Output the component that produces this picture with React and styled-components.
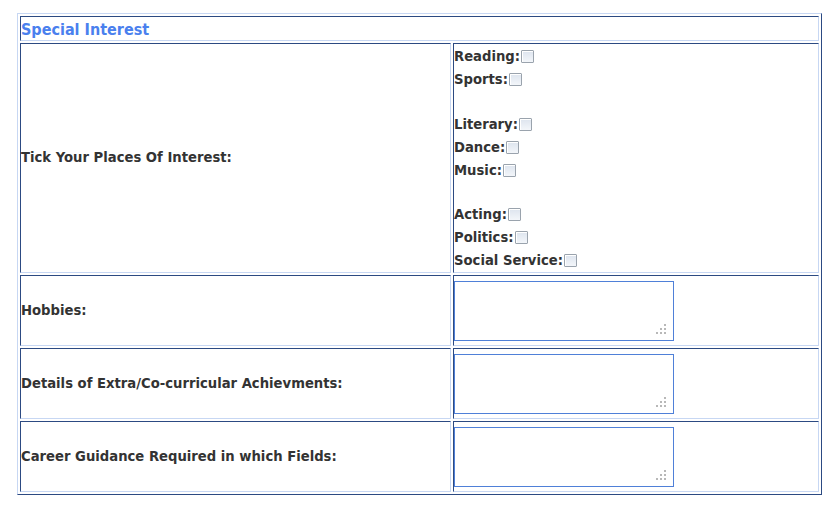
import React from 'react'
import styled, { createGlobalStyle } from 'styled-components'

const Global = createGlobalStyle`
  body {
    margin: 0;
    background: #fff;
    font-family: "DejaVu Sans", "Liberation Sans", sans-serif;
  }
`

const Page = styled.div`
  padding: 13px 0 0 17px;
`

const Table = styled.table`
  width: 805px;
  border-collapse: separate;
  border-spacing: 2px;
  border: 1px solid;
  border-color: #c7d7f3 #2c4a82 #2c4a82 #c7d7f3;
  table-layout: fixed;
`

const Col = styled.col`
  width: ${p => p.w}px;
`

const Cell = styled.td`
  padding: 0;
  border: 1px solid;
  border-color: #2c4a82 #c7d7f3 #c7d7f3 #2c4a82;
  vertical-align: middle;
  height: ${p => p.h - 2}px;
  font-size: 13.2px;
  font-weight: bold;
  color: #333;
  line-height: 16px;
`

const Heading = styled.div`
  font-family: "DejaVu Sans Condensed", "DejaVu Sans", sans-serif;
  font-stretch: condensed;
  font-size: 16px;
  font-weight: bold;
  line-height: 23px;
  height: 23px;
  padding-top: 1px;
  box-sizing: border-box;
  color: #4a80ee;
`

const Label = styled.span`
  display: block;
`

const Options = styled.div`
  display: flex;
  flex-direction: column;
  padding-top: 1px;
`

const Option = styled.label`
  display: flex;
  align-items: center;
  height: 23px;
`

const Gap = styled.div`
  height: ${p => p.h}px;
`

const Check = styled.input.attrs({ type: 'checkbox' })`
  appearance: none;
  width: 13px;
  height: 13px;
  margin: 0 0 0 1px;
  border: 1px solid #9aa3ad;
  border-radius: 1px;
  background: linear-gradient(#dde4ee, #f3f6fa);
  box-shadow: inset 1px 1px 0 #fff;
  box-sizing: border-box;
`

const AreaWrap = styled.div`
  position: relative;
  width: 220px;
  margin: 4px 0;
`

const Area = styled.textarea`
  display: block;
  width: 220px;
  height: 60px;
  margin: 0;
  box-sizing: border-box;
  border: 1px solid #4f80d8;
  border-radius: 0;
  outline: none;
  resize: none;
  font-family: inherit;
`

const Grip = styled.svg`
  position: absolute;
  right: 8px;
  bottom: 7px;
  pointer-events: none;
`

const gripDots = [[8, 0], [4, 4], [8, 4], [0, 8], [4, 8], [8, 8]]

const TextBox = () => (
  <AreaWrap>
    <Area />
    <Grip width="10" height="10" viewBox="0 0 10 10">
      {gripDots.map(([x, y]) => (
        <rect key={`${x}-${y}`} x={x} y={y} width="2" height="2" fill="#b8b8b8" />
      ))}
    </Grip>
  </AreaWrap>
)

const interests = [
  ['Reading', 'Sports'],
  ['Literary', 'Dance', 'Music'],
  ['Acting', 'Politics', 'Social Service'],
]

const fields = [
  'Hobbies:',
  'Details of Extra/Co-curricular Achievments:',
  'Career Guidance Required in which Fields:',
]

export default function App() {
  return (
    <Page>
      <Global />
      <Table>
        <colgroup>
          <Col w={431} />
          <Col w={366} />
        </colgroup>
        <tbody>
          <tr>
            <Cell colSpan={2} h={25}>
              <Heading>Special Interest</Heading>
            </Cell>
          </tr>
          <tr>
            <Cell h={230}>
              <Label>Tick Your Places Of Interest:</Label>
            </Cell>
            <Cell h={230}>
              <Options>
                {interests.map((group, i) => (
                  <React.Fragment key={i}>
                    {i > 0 && <Gap h={i === 1 ? 22 : 21} />}
                    {group.map(name => (
                      <Option key={name}>
                        {name}:<Check />
                      </Option>
                    ))}
                  </React.Fragment>
                ))}
              </Options>
            </Cell>
          </tr>
          {fields.map(f => (
            <tr key={f}>
              <Cell h={71}>
                <Label>{f}</Label>
              </Cell>
              <Cell h={71}>
                <TextBox />
              </Cell>
            </tr>
          ))}
        </tbody>
      </Table>
    </Page>
  )
}
